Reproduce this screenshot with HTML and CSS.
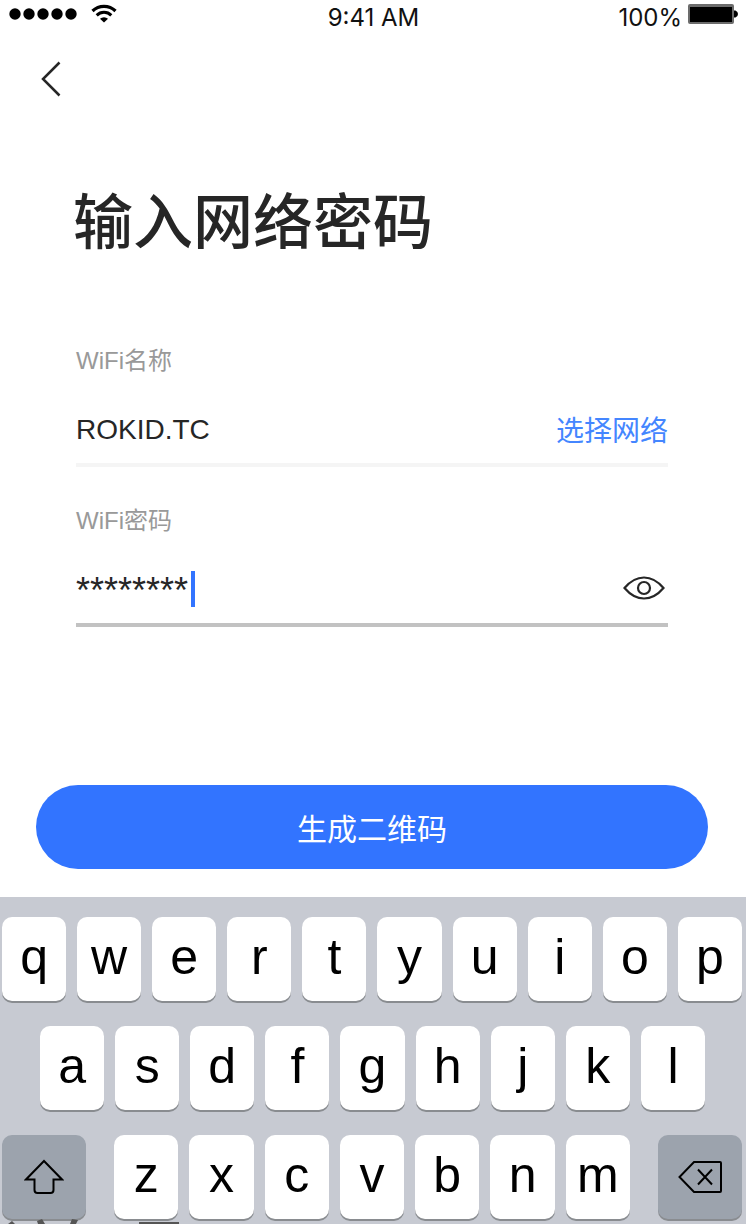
FILE: index.html
```
<!DOCTYPE html>
<html lang="zh-CN">
<head>
<meta charset="utf-8">
<title>输入网络密码</title>
<link rel="stylesheet" href="styles.css">
</head>
<body>
<div class="screen">
  <header class="status">
    <div class="status-left">
      <svg class="signal" viewBox="0 0 68 12"><circle cx="6" cy="6" r="5.7"/><circle cx="20" cy="6" r="5.7"/><circle cx="34" cy="6" r="5.7"/><circle cx="48" cy="6" r="5.7"/><circle cx="62" cy="6" r="5.7"/></svg>
      <svg class="wifi" viewBox="0 0 26 19"><path d="M1.500 7a16.500 16.500 0 0 1 23 0" stroke-width="3.200"/><path d="M5.700 11.300a10.500 10.500 0 0 1 14.600 0" stroke-width="3"/><path d="M9 14.800a6 6 0 0 1 8 0L13 18.500z" class="fill"/></svg>
    </div>
    <span class="time">9:41 AM</span>
    <div class="status-right">
      <span>100%</span>
      <svg class="battery" viewBox="0 0 50 20"><rect width="46" height="20" rx="2" fill="#6c6c6c"/><path d="M46 6.500h1.500q2.500 1 2.500 3.500t-2.500 3.500H46z"/><rect x="2" y="3" width="42" height="15"/></svg>
    </div>
  </header>
  <nav class="nav">
    <button class="icon-button" aria-label="返回"><svg class="back" viewBox="0 0 20 36"><path d="M18.500 1.500 2 18l16.500 16.500"/></svg></button>
  </nav>
  <main class="form">
    <h1 class="title">输入网络密码</h1>
    <div class="field">
      <label class="label" for="ssid">WiFi名称</label>
      <div class="row">
        <input class="input" id="ssid" type="text" value="ROKID.TC">
        <button class="choose">选择网络</button>
      </div>
    </div>
    <div class="field field-active">
      <label class="label" for="pwd">WiFi密码</label>
      <div class="row">
        <div class="entry">
          <input class="input masked" id="pwd" type="text" value="********">
          <span class="caret"></span>
        </div>
        <button class="icon-button reveal" aria-label="显示密码"><svg class="eye" viewBox="0 0 42 24"><path d="M1.500 12C7 5.500 13 1.500 21 1.500S35 5.500 40.500 12C35 18.500 29 22.500 21 22.500S7 18.500 1.500 12z"/><circle cx="21" cy="12" r="6"/></svg></button>
      </div>
    </div>
  </main>
  <button class="submit">生成二维码</button>
  <section class="keyboard">
    <div class="keys">
      <button class="key">q</button><button class="key">w</button><button class="key">e</button><button class="key">r</button><button class="key">t</button><button class="key">y</button><button class="key">u</button><button class="key">i</button><button class="key">o</button><button class="key">p</button>
    </div>
    <div class="keys keys-middle">
      <button class="key">a</button><button class="key">s</button><button class="key">d</button><button class="key">f</button><button class="key">g</button><button class="key">h</button><button class="key">j</button><button class="key">k</button><button class="key">l</button>
    </div>
    <div class="keys keys-bottom">
      <button class="key key-dark" aria-label="Shift"><svg class="shift" viewBox="0 0 40 36"><path d="M20 2 38 20.500H29.500V31q0 3-3 3h-13q-3 0-3-3V20.500H2z"/></svg></button>
      <div class="letters">
        <button class="key">z</button><button class="key">x</button><button class="key">c</button><button class="key">v</button><button class="key">b</button><button class="key">n</button><button class="key">m</button>
      </div>
      <button class="key key-dark" aria-label="Delete"><svg class="delete" viewBox="0 0 44 34"><path d="M16 2H42q1 0 1 1V31q0 1-1 1H16L1.500 17z"/><path d="m20 9.500 14 15m0-15-14 15"/></svg></button>
    </div>
    <svg class="peek" viewBox="0 0 180 5"><path d="m8 5 4-3 3 3zM37 2l5-2 3 5h-7zM72 0l6 1-2 4h-6zM139 3h40v2h-40z"/></svg>
  </section>
</div>
</body>
</html>
```
FILE: styles.css
```
* { box-sizing: border-box; }
body {
  margin: 0;
  background: #fff;
  color: #262626;
  font-family: "Liberation Sans", "Noto Sans CJK SC", sans-serif;
}
button, input {
  margin: 0;
  padding: 0;
  border: 0;
  background: none;
  color: inherit;
  font-family: inherit;
}
input { outline: 0; }
svg { display: block; fill: none; stroke: #262626; }
.screen {
  display: flex;
  flex-direction: column;
  height: 100vh;
  overflow: hidden;
}
.status {
  flex: none;
  display: grid;
  grid-template-columns: 1fr auto 1fr;
  height: 36px;
  padding: 4px 8px 0 9px;
  color: #111;
  font: 24px/28px Inter, sans-serif;
}
.status svg { fill: #000; stroke: none; }
.status-left { display: flex; gap: 14px; }
.status-right { display: flex; justify-content: flex-end; gap: 6px; }
.signal { width: 68px; height: 12px; margin-top: 4px; }
.wifi { width: 26px; height: 19px; }
.status .wifi { fill: none; stroke: #000; }
.wifi .fill { fill: #000; stroke: none; }
.battery { width: 50px; height: 20px; }
.nav { flex: none; padding: 25px 41px 0; }
.icon-button { display: block; }
.back { width: 20px; height: 36px; stroke-width: 2.5; }
.form { flex: none; padding: 77px 78px 0 76px; }
.title {
  margin: 0 0 77px -3px;
  font: 500 60px/88px "Noto Sans CJK SC", sans-serif;
}
.field { height: 128px; margin-bottom: 32px; border-bottom: 4px solid #f5f5f5; }
.field-active { border-color: #c2c2c2; }
.label { display: block; color: #999; font-size: 24px; line-height: 44px; }
.row {
  display: flex;
  align-items: center;
  justify-content: space-between;
  height: 48px;
  margin-top: 22px;
}
.input { height: 40px; padding-top: 2px; font-size: 28px; }
.choose { color: #4486ff; font: 28px/40px "Noto Sans CJK SC", sans-serif; }
.entry { display: flex; align-items: center; gap: 3px; }
.masked { field-sizing: content; height: 46px; padding-top: 4px; font-size: 36px; }
.caret { width: 4px; height: 36px; background: #3274ff; }
.reveal { padding: 0 3px 2px 0; }
.eye { width: 42px; height: 24px; stroke-width: 2.2; }
.submit {
  flex: none;
  height: 84px;
  margin: 126px 38px 28px 36px;
  border-radius: 42px;
  background: #3274ff;
  color: #fff;
  font: 30px/84px "Noto Sans CJK SC", sans-serif;
}
.keyboard {
  flex: 1;
  display: flex;
  flex-direction: column;
  gap: 25px;
  padding: 20px 4px 0 2px;
  background: #c7cad2;
  position: relative;
}
.keys, .letters { display: flex; gap: 11px; }
.keys-middle { padding: 0 37px 0 38px; }
.keys-bottom { gap: 28px; }
.letters { flex: 1; }
.key {
  flex: 1 1 0;
  display: flex;
  align-items: center;
  justify-content: center;
  height: 84px;
  padding-bottom: 4px;
  border-radius: 10px;
  background: #fff;
  box-shadow: 0 2px 0 #898c90;
  color: #000;
  font-size: 50px;
  line-height: 80px;
}
.key-dark { flex: none; width: 84px; padding: 0; background: #9ca3ad; }
.key svg { stroke: #000; stroke-width: 2; }
.shift { width: 40px; height: 36px; }
.delete { width: 44px; height: 34px; }
.peek { position: absolute; left: 0; bottom: 0; width: 180px; height: 5px; }
.keyboard .peek { fill: #555; stroke: none; }
```
